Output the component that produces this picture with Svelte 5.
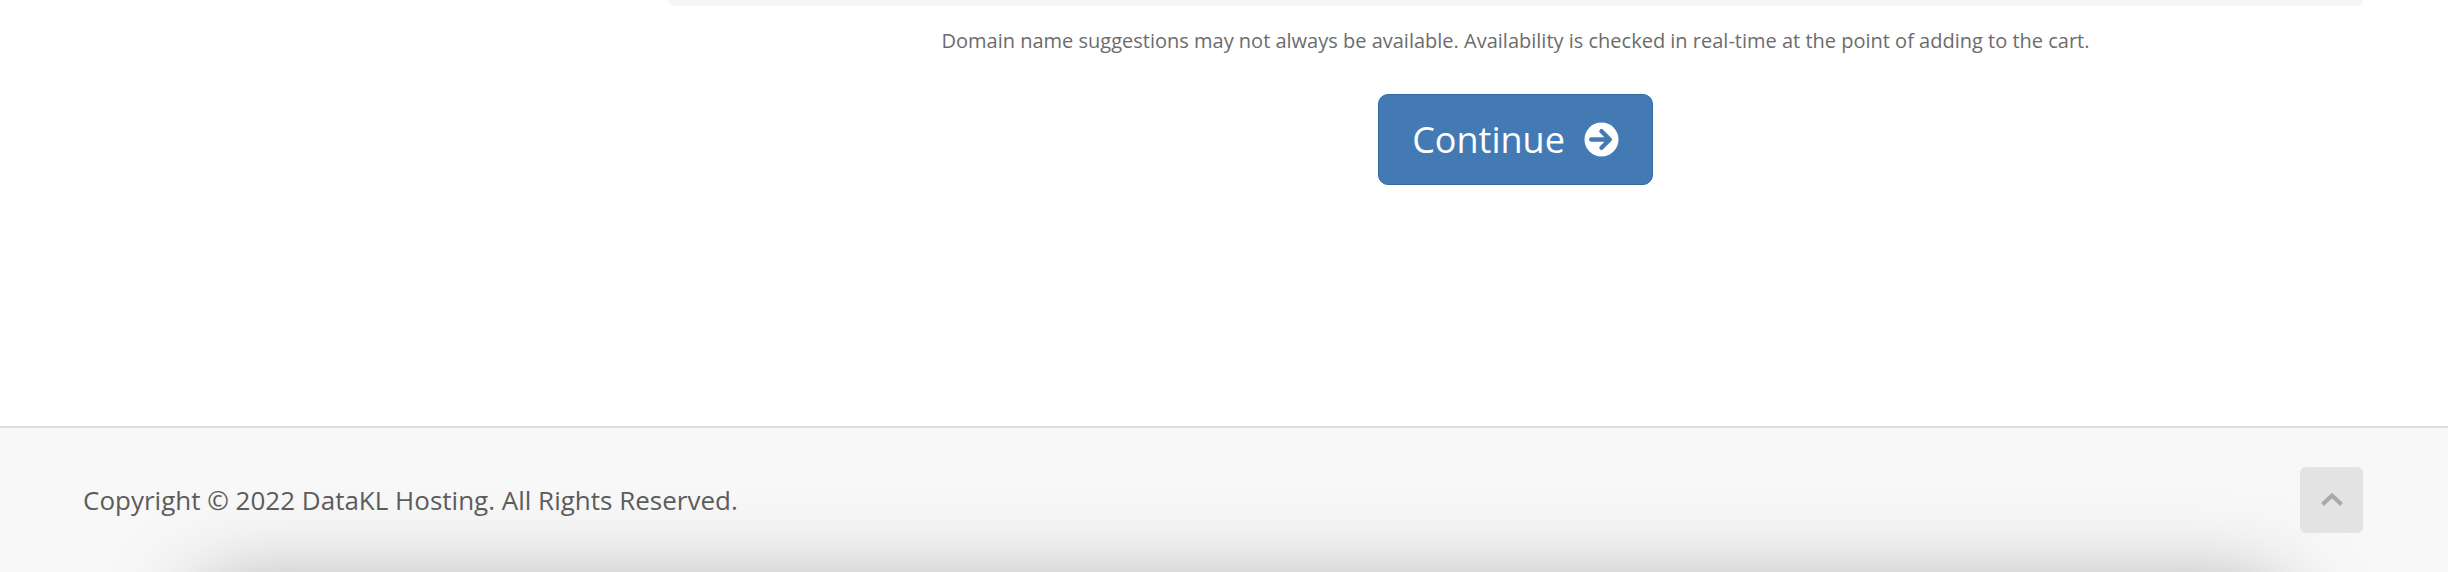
<script>
  const year = 2022;
</script>

<div class="page">
  <main class="main">
    <div class="side"></div>
    <section class="content">
      <div class="well"></div>
      <p class="note">Domain name suggestions may not always be available. Availability is checked in real-time at the point of adding to the cart.</p>
      <div class="actions">
        <button class="continue" type="button">
          <span>Continue</span>
          <svg class="arrow" viewBox="0 0 36 36" width="35" height="35" aria-hidden="true">
            <circle cx="18" cy="18" r="17.5" fill="#fff" />
            <path d="M7.5 18H25M18 9.5L26.5 18L18 26.5" fill="none" stroke="#447ab3" stroke-width="4.6" stroke-linecap="round" stroke-linejoin="round" />
          </svg>
        </button>
      </div>
    </section>
  </main>
  <footer class="footer">
    <p class="copy">Copyright © {year} DataKL Hosting. All Rights Reserved.</p>
    <button class="top" type="button" aria-label="Back to top">
      <svg viewBox="0 0 24 14" width="24" height="14" aria-hidden="true">
        <path d="M2.5 11.5L12 2.5L21.5 11.5" fill="none" stroke="#a9a9a9" stroke-width="4" stroke-linejoin="miter" />
      </svg>
    </button>
    <div class="shade"></div>
  </footer>
</div>

<style>
  :global(body) {
    margin: 0;
    background: #fff;
  }
  .page {
    width: 2448px;
    height: 572px;
    overflow: hidden;
    display: flex;
    flex-direction: column;
    font-family: "Open Sans", sans-serif;
  }
  .main {
    height: 426px;
    display: flex;
    padding: 0 85px 0 0;
    box-sizing: border-box;
    flex: none;
  }
  .side {
    width: 668px;
    flex: none;
  }
  .content {
    flex: 1;
    min-width: 0;
  }
  .well {
    height: 6px;
    background: #f5f5f5;
    border-radius: 0 0 8px 8px;
  }
  .note {
    margin: 17px 0 0;
    height: 36px;
    font-size: 20px;
    line-height: 36px;
    color: #6c6c6c;
    text-align: center;
  }
  .actions {
    display: flex;
    justify-content: center;
    margin-top: 35px;
  }
  .continue {
    width: 275px;
    height: 91px;
    display: flex;
    align-items: center;
    justify-content: center;
    gap: 19px;
    padding: 0;
    background: #447ab3;
    border: 1px solid #336aa5;
    border-radius: 10px;
    color: #fff;
    font: 400 36px/1 "Open Sans", sans-serif;
  }
  .arrow {
    flex: none;
  }
  .footer {
    position: relative;
    flex: 1;
    display: flex;
    align-items: center;
    justify-content: space-between;
    padding: 0 85px 0 83px;
    background: #f8f8f8;
    border-top: 2px solid #dcdcdc;
    overflow: hidden;
  }
  .copy {
    position: relative;
    z-index: 1;
    margin: 0;
    font-size: 26px;
    line-height: 36px;
    color: #5c5c5c;
  }
  .top {
    position: relative;
    z-index: 1;
    width: 63px;
    height: 66px;
    padding: 0;
    display: flex;
    align-items: center;
    justify-content: center;
    background: #e3e3e3;
    border: 0;
    border-radius: 6px;
  }
  .shade {
    position: absolute;
    left: 200px;
    right: 170px;
    top: 162px;
    height: 300px;
    background: rgba(0, 0, 0, 0.34);
    filter: blur(45px);
  }
</style>
